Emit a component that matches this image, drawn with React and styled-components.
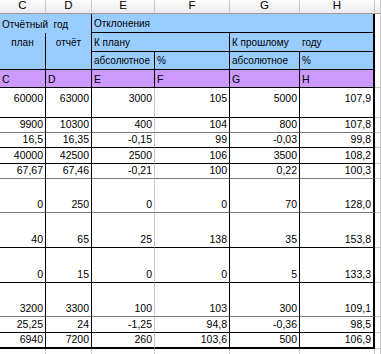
import React from 'react';
import styled, { createGlobalStyle } from 'styled-components'

const BLUE = '#99ccff'
const PURPLE = '#cc99ff'
const GRID = '#c8c8c8'
const INK = '#000'

const Global = createGlobalStyle`
html, body {
    margin:0;
    padding:0;
    background:#fff;
    overflow:hidden;
}
body{
    font-family:"Liberation Sans", Arial, sans-serif;
    font-size:10.5px;
    color:#000;
}
`

const rowHeights = [14, 19, 19, 18, 18, 30, 15, 15, 16, 15, 34, 35, 35, 34, 16, 16, 20]

const Sheet = styled.div`
display:grid;
grid-template-columns:46px 46px 63px 75px 70px 75px 1fr;
grid-template-rows:${props => props.$rows};
width:381px;
`

const ColHead = styled.div`
display:flex;
align-items:center;
justify-content:center;
background:linear-gradient(#fdfdfd, #ebebeb);
border-right:1px solid ${GRID};
border-bottom:1px solid #9a9a9a;
font-size:11.5px;
line-height:1;
padding-bottom:1px;
box-sizing:border-box;
`

const Cell = styled.div`
box-sizing:border-box;
display:flex;
background:${props => props.$bg || '#fff'};
grid-column:${props => props.$col};
grid-row:${props => props.$row};
border-right:${props => props.$right || `1px solid ${GRID}`};
border-bottom:${props => props.$bottom || 'none'};
justify-content:${props => props.$align === 'right' ? 'flex-end' : props.$align === 'center' ? 'center' : 'flex-start'};
align-items:${props => props.$valign === 'top' ? 'flex-start' : 'flex-end'};
padding:${props => props.$valign === 'top' ? '4px 2px 0 2px' : '0 2px 2px 2px'};
font-size:${props => props.$small ? '10px' : 'inherit'};
white-space:pre;
line-height:12px;
overflow:hidden;
`

const Split = styled.span`
display:inline-block;
width:${props => props.$w}px;
`

const black = `1px solid ${INK}`
const thick = `2px solid ${INK}`
const grey = `1px solid #7a7a7a`

const data = [
    { v: ['60000', '63000', '3000', '105', '5000', '107,9'], line: black, top: true },
    { v: ['9900', '10300', '400', '104', '800', '107,8'], line: grey },
    { v: ['16,5', '16,35', '-0,15', '99', '-0,03', '99,8'], line: black },
    { v: ['40000', '42500', '2500', '106', '3500', '108,2'], line: black },
    { v: ['67,67', '67,46', '-0,21', '100', '0,22', '100,3'], line: grey },
    { v: ['0', '250', '0', '0', '70', '128,0'], line: grey },
    { v: ['40', '65', '25', '138', '35', '153,8'], line: black },
    { v: ['0', '15', '0', '0', '5', '133,3'], line: black },
    { v: ['3200', '3300', '100', '103', '300', '109,1'], line: grey },
    { v: ['25,25', '24', '-1,25', '94,8', '-0,36', '98,5'], line: black },
    { v: ['6940', '7200', '260', '103,6', '500', '106,9'], line: thick },
]

// right border of each data column C..H
const dataRight = [black, black, `1px solid ${GRID}`, black, black, thick]

export default function App() {
    const letters = ['C', 'D', 'E', 'F', 'G', 'H', '']
    const firstData = 6
    const blankRow = firstData + data.length

    return (
        <>
            <Global />
            <Sheet $rows={rowHeights.map(h => h + 'px').join(' ')}>
                {letters.map((l, i) => (
                    <ColHead key={'h' + i} style={{ gridColumn: i + 1, gridRow: 1 }}>{l}</ColHead>
                ))}

                <Cell $col="1 / 3" $row="2" $bg={BLUE} $right={black} $small>Отчётный  год</Cell>
                <Cell $col="3 / 7" $row="2" $bg={BLUE} $right={thick} $bottom={black} $small>Отклонения</Cell>
                <Cell $col="7" $row="2" />

                <Cell $col="1" $row="3 / 5" $bg={BLUE} $right={black} $bottom={black} $align="center" $valign="top" $small>план</Cell>
                <Cell $col="2" $row="3 / 5" $bg={BLUE} $right={black} $bottom={black} $align="center" $valign="top" $small>отчёт</Cell>
                <Cell $col="3 / 5" $row="3" $bg={BLUE} $right={black} $bottom={black} $small>К плану</Cell>
                <Cell $col="5 / 7" $row="3" $bg={BLUE} $right={thick} $bottom={black} $small>
                    <Split $w={70}>К прошлому</Split>году
                </Cell>
                <Cell $col="7" $row="3" />

                <Cell $col="3" $row="4" $bg={BLUE} $right={black} $bottom={black} $small>абсолютное</Cell>
                <Cell $col="4" $row="4" $bg={BLUE} $right={black} $bottom={black} $small>%</Cell>
                <Cell $col="5" $row="4" $bg={BLUE} $right={black} $bottom={black} $small>абсолютное</Cell>
                <Cell $col="6" $row="4" $bg={BLUE} $right={thick} $bottom={black} $small>%</Cell>
                <Cell $col="7" $row="4" />

                {letters.slice(0, 6).map((l, i) => (
                    <Cell key={'p' + i} $col={i + 1} $row="5" $bg={PURPLE} $right={i === 5 ? thick : black} $bottom={black}>{l}</Cell>
                ))}
                <Cell $col="7" $row="5" $bottom={`1px solid ${GRID}`} />

                {data.map((r, ri) => (
                    <React.Fragment key={'r' + ri}>
                        {r.v.map((v, ci) => (
                            <Cell
                                key={ci}
                                $col={ci + 1}
                                $row={firstData + ri}
                                $align="right"
                                $valign={r.top ? 'top' : 'bottom'}
                                $right={dataRight[ci]}
                                $bottom={r.line}
                            >{v}</Cell>
                        ))}
                        <Cell $col="7" $row={firstData + ri} $bottom={`1px solid ${GRID}`} />
                    </React.Fragment>
                ))}

                {letters.map((l, i) => (
                    <Cell key={'b' + i} $col={i + 1} $row={blankRow} />
                ))}
            </Sheet>
        </>
    )
}
